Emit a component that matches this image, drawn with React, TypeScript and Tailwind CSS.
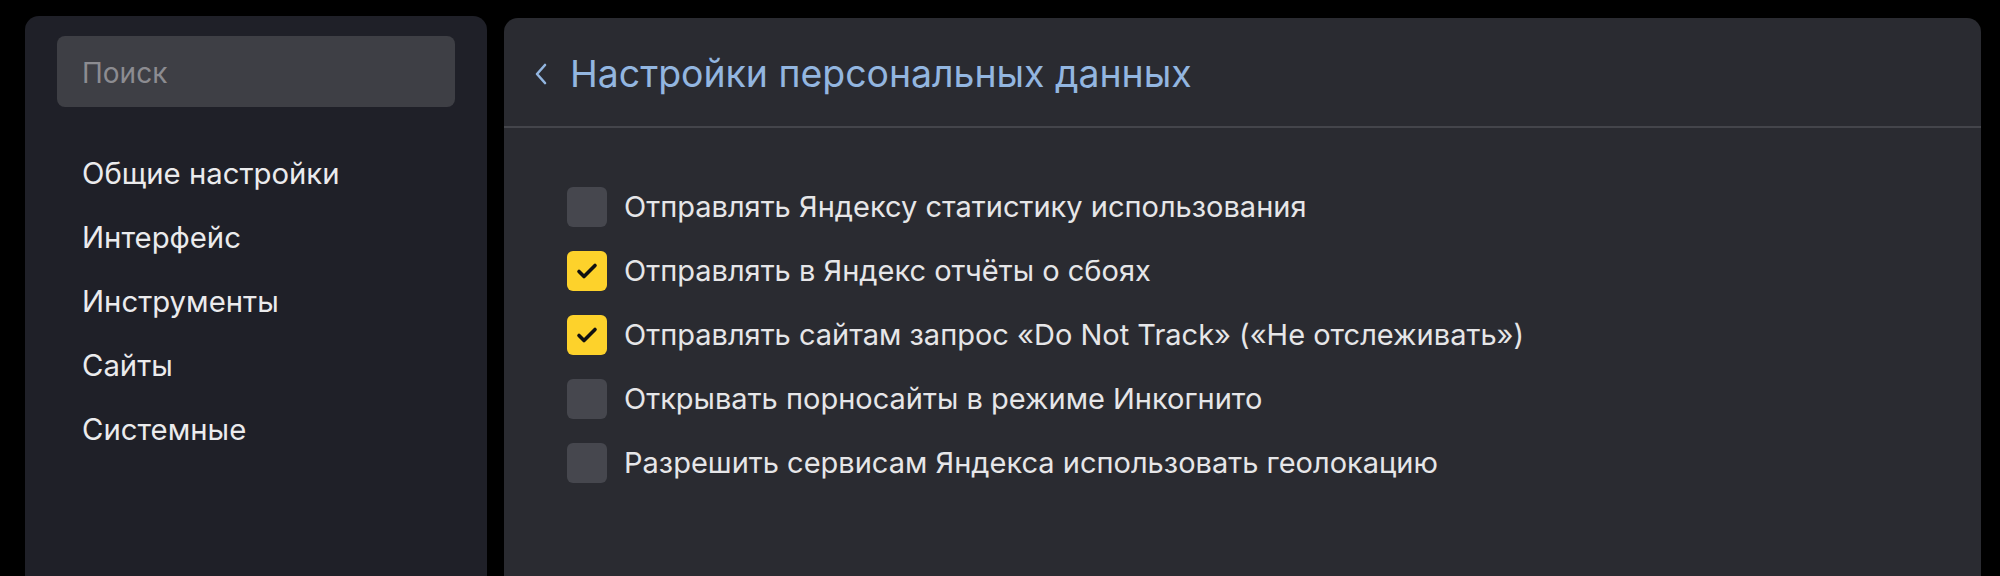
import React from "react";

const navItems = ["Общие настройки", "Интерфейс", "Инструменты", "Сайты", "Системные"];

const options: { label: string; checked: boolean }[] = [
  { label: "Отправлять Яндексу статистику использования", checked: false },
  { label: "Отправлять в Яндекс отчёты о сбоях", checked: true },
  { label: "Отправлять сайтам запрос «Do Not Track» («Не отслеживать»)", checked: true },
  { label: "Открывать порносайты в режиме Инкогнито", checked: false },
  { label: "Разрешить сервисам Яндекса использовать геолокацию", checked: false },
];

function Checkbox({ checked }: { checked: boolean }) {
  return (
    <div
      className={
        checked
          ? "w-[40px] h-[40px] rounded-[6px] bg-[#fdd22b] flex items-center justify-center shrink-0"
          : "w-[40px] h-[40px] rounded-[6px] bg-[#46474e] shrink-0"
      }
    >
      {checked && (
        <svg width="28" height="28" viewBox="0 0 28 28" fill="none">
          <path d="M6 14.5l5 5L22 8.5" stroke="#111" strokeWidth="3.6" strokeLinecap="round" strokeLinejoin="round" />
        </svg>
      )}
    </div>
  );
}

export default function App() {
  return (
    <div
      className="w-[2000px] h-[576px] bg-black flex gap-[17px] pl-[25px] pr-[19px] pt-[16px] overflow-hidden"
      style={{ fontFamily: "Inter, 'Noto Sans', sans-serif" }}
    >
      <aside className="w-[462px] shrink-0 bg-[#1f2028] rounded-t-[14px] px-[32px] pt-[20px]">
        <div className="h-[71px] rounded-[8px] bg-[#3e3f45] pl-[25px] pt-[3px] flex items-center text-[28px] text-[#8c8c91]">
          Поиск
        </div>
        <nav className="mt-[35px] flex flex-col">
          {navItems.map((n) => (
            <div key={n} className="h-[64px] flex items-center pl-[25px] text-[29.3px] text-[#ebebed]">
              {n}
            </div>
          ))}
        </nav>
      </aside>
      <main className="flex-1 mt-[2px] bg-[#2a2b31] rounded-t-[14px] flex flex-col">
        <header className="h-[110px] pt-[4px] flex items-center pl-[30px] gap-[22px] border-b-2 border-[#44454b]">
          <svg width="14" height="22" viewBox="0 0 14 22" fill="none">
            <path d="M11 2L3 11l8 9" stroke="#93b6e0" strokeWidth="2.6" strokeLinecap="round" strokeLinejoin="round" />
          </svg>
          <h1 className="text-[37.4px] text-[#93b6e0] font-normal">Настройки персональных данных</h1>
        </header>
        <div className="pt-[47px] pl-[63px] flex flex-col">
          {options.map((o) => (
            <div key={o.label} className="h-[64px] flex items-center gap-[17px]">
              <Checkbox checked={o.checked} />
              <span className="text-[29px] text-[#e6e6e8]">{o.label}</span>
            </div>
          ))}
        </div>
      </main>
    </div>
  );
}
